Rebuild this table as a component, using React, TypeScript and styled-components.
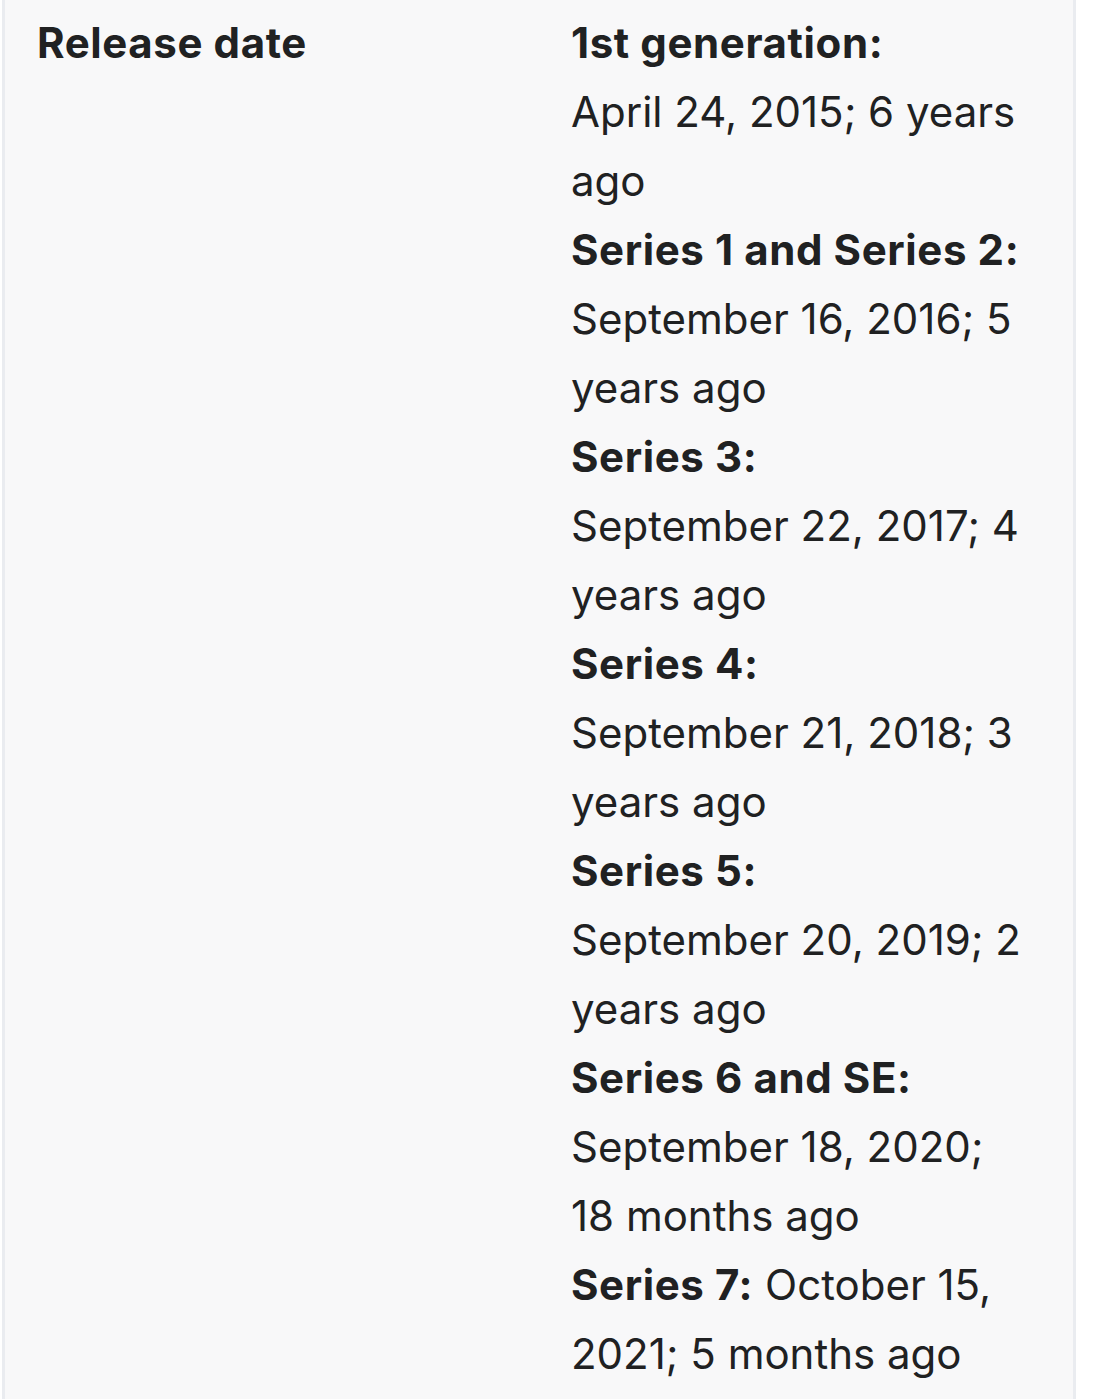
import React from "react";
import styled, { createGlobalStyle } from "styled-components";

const GlobalStyle = createGlobalStyle`
  html, body {
    margin: 0;
    padding: 0;
    background: #ffffff;
  }
  body {
    font-family: Inter, "Noto Sans", "Liberation Sans", sans-serif;
    color: #202122;
  }
`;

const InfoBox = styled.div`
  margin-left: 2px;
  width: 1068px;
  min-height: 1399px;
  box-sizing: content-box;
  background: #f8f8f9;
  border-left: 3px solid #eaecf0;
  border-right: 3px solid #eaecf0;
`;

const InfoRow = styled.div`
  display: grid;
  grid-template-columns: 1fr 1fr;
  padding: 8px 0 11px;
  font-size: 42px;
  line-height: 69px;
`;

const Label = styled.div`
  padding: 0 32px;
  font-weight: 700;
  letter-spacing: 0.6px;
`;

const Value = styled.div`
  padding: 0 46px 0 32px;
  font-weight: 400;
`;

const Entry = styled.div``;

const Term = styled.b`
  font-weight: 700;
  letter-spacing: 0.6px;
`;

const releases = [
  { name: "1st generation:", text: "April 24, 2015; 6 years ago", block: true },
  { name: "Series 1 and Series 2:", text: "September 16, 2016; 5 years ago", block: true },
  { name: "Series 3:", text: "September 22, 2017; 4 years ago", block: true },
  { name: "Series 4:", text: "September 21, 2018; 3 years ago", block: true },
  { name: "Series 5:", text: "September 20, 2019; 2 years ago", block: true },
  { name: "Series 6 and SE:", text: "September 18, 2020; 18 months ago", block: true },
  { name: "Series 7:", text: "October 15, 2021; 5 months ago", block: false },
];

const App = () => {
  return (
    <>
      <GlobalStyle />
      <InfoBox>
        <InfoRow>
          <Label>Release date</Label>
          <Value>
            {releases.map((r) => (
              <Entry key={r.name}>
                <Term>{r.name}</Term>
                {r.block ? <br /> : " "}
                {r.text}
              </Entry>
            ))}
          </Value>
        </InfoRow>
      </InfoBox>
    </>
  );
};

export default App;
